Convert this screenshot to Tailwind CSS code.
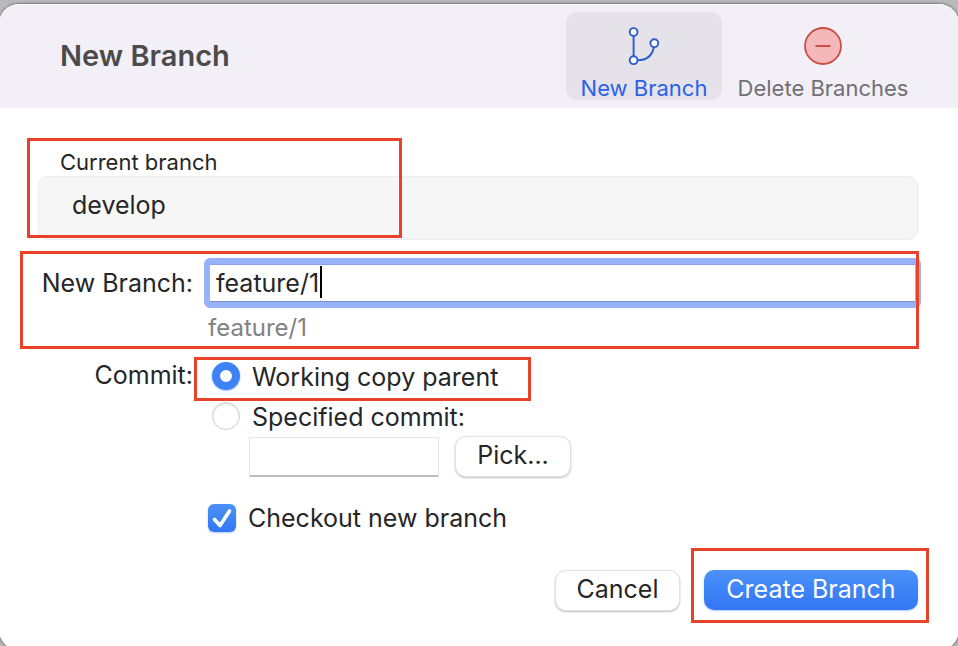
<!DOCTYPE html>
<html lang="en">
<head>
<meta charset="utf-8">
<meta name="viewport" content="width=device-width, initial-scale=1">
<title>New Branch</title>
<script src="https://cdn.jsdelivr.net/npm/@tailwindcss/browser@4"></script>
</head>
<body class="h-screen overflow-hidden bg-[#b9b9bb] pt-1 font-['Inter','Liberation_Sans',sans-serif] text-[25px] leading-8 text-[#262626]">
<div class="-mx-px flex min-h-screen flex-col overflow-hidden rounded-[20px] bg-white px-px shadow-[0_0_2px_1px_#77777b]">
  <header class="-mx-px flex h-[104px] items-start justify-between border-t border-t-white bg-[#f2eff7] pt-[7px] pr-[35px] pl-[61px]">
    <h1 class="pt-[26px] text-[29px] font-semibold leading-9 text-[#4b4b4c]">New Branch</h1>
    <nav class="flex text-[22px] leading-6" aria-label="Branch actions">
      <button type="button" class="flex h-22 w-[156px] flex-col items-center rounded-xl bg-[#e5e2e9] pt-3 text-[#2a63e6]">
        <svg class="h-11 w-11" viewBox="0 0 44 44" fill="none" stroke="#2c5ccb" stroke-width="1.9" aria-hidden="true">
          <path d="M11.600 12v20M15.500 36.300c9.500 0 15-5.500 16.500-13.500"/>
          <circle cx="11.600" cy="8" r="3.900" fill="#fff"/>
          <circle cx="11.600" cy="36.200" r="3.900" fill="#fff"/>
          <circle cx="32.300" cy="19.200" r="3.900" fill="#fff"/>
        </svg>
        <span class="mt-2 whitespace-nowrap">New Branch</span>
      </button>
      <button type="button" class="flex h-22 w-[202px] flex-col items-center rounded-xl pt-3 text-[#717073]">
        <svg class="h-11 w-11" viewBox="0 0 44 44" fill="none" stroke="#c94f43" stroke-width="1.800" aria-hidden="true">
          <circle cx="22" cy="22" r="18" fill="#f4b8ba"/>
          <path d="M14.500 22h15"/>
        </svg>
        <span class="mt-2 whitespace-nowrap">Delete Branches</span>
      </button>
    </nav>
  </header>

  <form class="pt-10 pr-[37px] pl-[38px]">
    <section class="relative mr-[3px]">
      <label for="current" class="block pl-[22px] text-[22px] leading-7">Current branch</label>
      <output id="current" class="block h-16 rounded-[10px] border border-[#ececec] bg-[#f6f6f6] px-[33px] pt-3">develop</output>
      <div class="pointer-events-none absolute -top-2.5 -left-[11px] h-[100px] w-[375px] border-3 border-[#e8432a]"></div>
    </section>

    <div class="mt-[18px] grid grid-cols-[155px_1fr] gap-x-[11px]">
      <div class="relative col-span-2 grid grid-cols-subgrid">
        <label for="branch" class="pt-[9px] text-right whitespace-nowrap">New Branch:</label>
        <div class="relative">
          <input id="branch" type="text" value="feature/1" class="block h-[50px] w-full rounded-md border-6 border-[#98b2f7] bg-white px-1.5 shadow-[inset_0_1px_0_#87a1ea,inset_0_-1px_0_#7590d6] outline-none">
          <span class="absolute top-2 left-[116px] h-8 w-0.5 bg-black"></span>
          <p class="mt-1 pl-1 text-[24px] text-[#828282]">feature/1</p>
        </div>
        <div class="pointer-events-none absolute -top-[7px] right-0.5 -left-[18px] h-[98px] border-3 border-[#e8432a]"></div>
      </div>

      <span id="commit" class="mt-[15px] text-right">Commit:</span>
      <div class="mt-3" role="radiogroup" aria-labelledby="commit">
        <div class="relative flex h-10 items-center gap-3 pl-2">
          <input id="parent" type="radio" name="commit" checked class="size-7 appearance-none rounded-full border-[8px] border-[#3d83f7] bg-white shadow-[0_1px_2px_#3478f666]">
          <label for="parent" class="pt-0.5">Working copy parent</label>
          <div class="pointer-events-none absolute top-px -left-2.5 h-11 w-[337px] border-3 border-[#e8432a]"></div>
        </div>
        <div class="flex h-10 items-center gap-3 pl-2">
          <input id="specified" type="radio" name="commit" class="size-7 appearance-none rounded-full border border-[#cfcfcf] bg-white shadow-[inset_0_1px_2px_#00000026]">
          <label for="specified" class="pt-0.5">Specified commit:</label>
        </div>
        <div class="flex items-end gap-4 pl-[45px]">
          <input type="text" aria-label="Commit hash" class="h-10 w-[190px] border border-b-2 border-[#e4e4e4] border-b-[#bdbdbd] bg-white px-2 outline-none">
          <button type="button" class="h-[41px] w-[116px] rounded-[11px] border border-[#e2e2e2] bg-white pb-1 shadow-[0_1px_2px_#00000040]">Pick...</button>
        </div>
        <div class="mt-[25px] flex items-center gap-3 pl-1">
          <span class="relative size-7">
            <input id="checkout" type="checkbox" checked class="block size-7 appearance-none rounded-md bg-linear-to-b from-[#4b91f8] to-[#3376f4] shadow-[0_1px_2px_#3478f666]">
            <svg class="pointer-events-none absolute inset-0" viewBox="0 0 28 28" fill="none" stroke="#fff" stroke-width="3.600" stroke-linecap="round" stroke-linejoin="round" aria-hidden="true"><path d="M6.500 15.500l5.500 6L21.500 7"/></svg>
          </span>
          <label for="checkout">Checkout new branch</label>
        </div>
      </div>
    </div>

    <footer class="mt-9 mr-[3px] flex items-start justify-end gap-6">
      <button type="button" class="h-[41px] w-[125px] rounded-[11px] border border-[#e2e2e2] bg-white pb-1 shadow-[0_1px_2px_#00000040]">Cancel</button>
      <div class="relative">
        <button type="submit" class="block h-10 w-[214px] rounded-[10px] bg-linear-to-b from-[#4b91f8] to-[#3376f4] pb-0.5 text-white shadow-[0_1px_2px_#3478f666]">Create Branch</button>
        <div class="pointer-events-none absolute -top-[22px] -left-[13px] h-[75px] w-[238px] border-3 border-[#e8432a]"></div>
      </div>
    </footer>
  </form>
</div>
</body>
</html>
